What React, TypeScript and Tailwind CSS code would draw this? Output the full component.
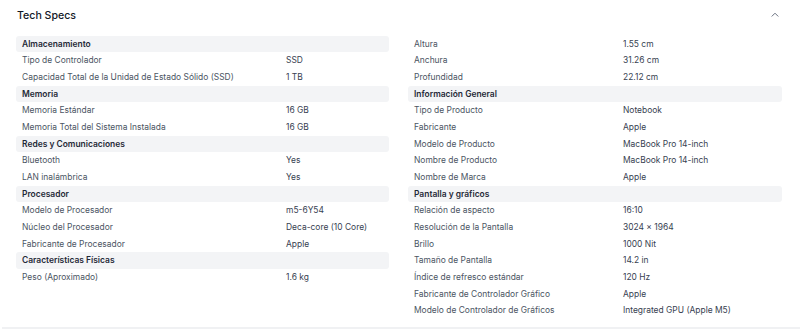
import React from "react";

type Row = { h?: string; l?: string; v?: string };

const left: Row[] = [
  { h: "Almacenamiento" },
  { l: "Tipo de Controlador", v: "SSD" },
  { l: "Capacidad Total de la Unidad de Estado Sólido (SSD)", v: "1 TB" },
  { h: "Memoria" },
  { l: "Memoria Estándar", v: "16 GB" },
  { l: "Memoria Total del Sistema Instalada", v: "16 GB" },
  { h: "Redes y Comunicaciones" },
  { l: "Bluetooth", v: "Yes" },
  { l: "LAN inalámbrica", v: "Yes" },
  { h: "Procesador" },
  { l: "Modelo de Procesador", v: "m5-6Y54" },
  { l: "Núcleo del Procesador", v: "Deca-core (10 Core)" },
  { l: "Fabricante de Procesador", v: "Apple" },
  { h: "Características Físicas" },
  { l: "Peso (Aproximado)", v: "1.6 kg" },
];

const right: Row[] = [
  { l: "Altura", v: "1.55 cm" },
  { l: "Anchura", v: "31.26 cm" },
  { l: "Profundidad", v: "22.12 cm" },
  { h: "Información General" },
  { l: "Tipo de Producto", v: "Notebook" },
  { l: "Fabricante", v: "Apple" },
  { l: "Modelo de Producto", v: "MacBook Pro 14-inch" },
  { l: "Nombre de Producto", v: "MacBook Pro 14-inch" },
  { l: "Nombre de Marca", v: "Apple" },
  { h: "Pantalla y gráficos" },
  { l: "Relación de aspecto", v: "16:10" },
  { l: "Resolución de la Pantalla", v: "3024 × 1964" },
  { l: "Brillo", v: "1000 Nit" },
  { l: "Tamaño de Pantalla", v: "14.2 in" },
  { l: "Índice de refresco estándar", v: "120 Hz" },
  { l: "Fabricante de Controlador Gráfico", v: "Apple" },
  { l: "Modelo de Controlador de Gráficos", v: "Integrated GPU (Apple M5)" },
];

function Col({ rows, labelW }: { rows: Row[]; labelW: string }) {
  return (
    <div className="flex flex-col">
      {rows.map((r, i) =>
        r.h ? (
          <div
            key={i}
            className="h-[16.67px] flex items-center rounded-[3px] bg-[#f3f4f6] px-[6px] font-semibold text-[#1f2937] whitespace-nowrap"
          >
            {r.h}
          </div>
        ) : (
          <div key={i} className="h-[16.67px] flex items-center whitespace-nowrap">
            <div className={`${labelW} shrink-0 px-[6px] text-[#4b5563]`}>{r.l}</div>
            <div className="px-[6px] text-[#374151]">{r.v}</div>
          </div>
        )
      )}
    </div>
  );
}

export default function App() {
  return (
    <div
      className="w-[800px] h-[330px] bg-white relative"
      style={{ fontFamily: "Inter, 'Noto Sans', sans-serif" }}
    >
      <div className="flex items-center justify-between pl-[17px] pr-[21px] pt-[6px] h-[26px]">
        <div className="text-[10.6px] text-[#111827] font-medium">Tech Specs</div>
        <svg width="8" height="5" viewBox="0 0 8 5" fill="none" className="mt-[-3px]">
          <path d="M1 4.2L4 1.2L7 4.2" stroke="#6b7280" strokeWidth="1" strokeLinecap="round" strokeLinejoin="round" />
        </svg>
      </div>
      <div className="grid grid-cols-[373px_374px] gap-x-[19px] pl-[16px] pt-[9.7px] text-[8.45px] leading-none">
        <Col rows={left} labelW="w-[264px]" />
        <Col rows={right} labelW="w-[209px]" />
      </div>
      <div className="absolute left-[2px] right-0 top-[327px] h-[2px] bg-[#f0f1f3]" />
    </div>
  );
}
